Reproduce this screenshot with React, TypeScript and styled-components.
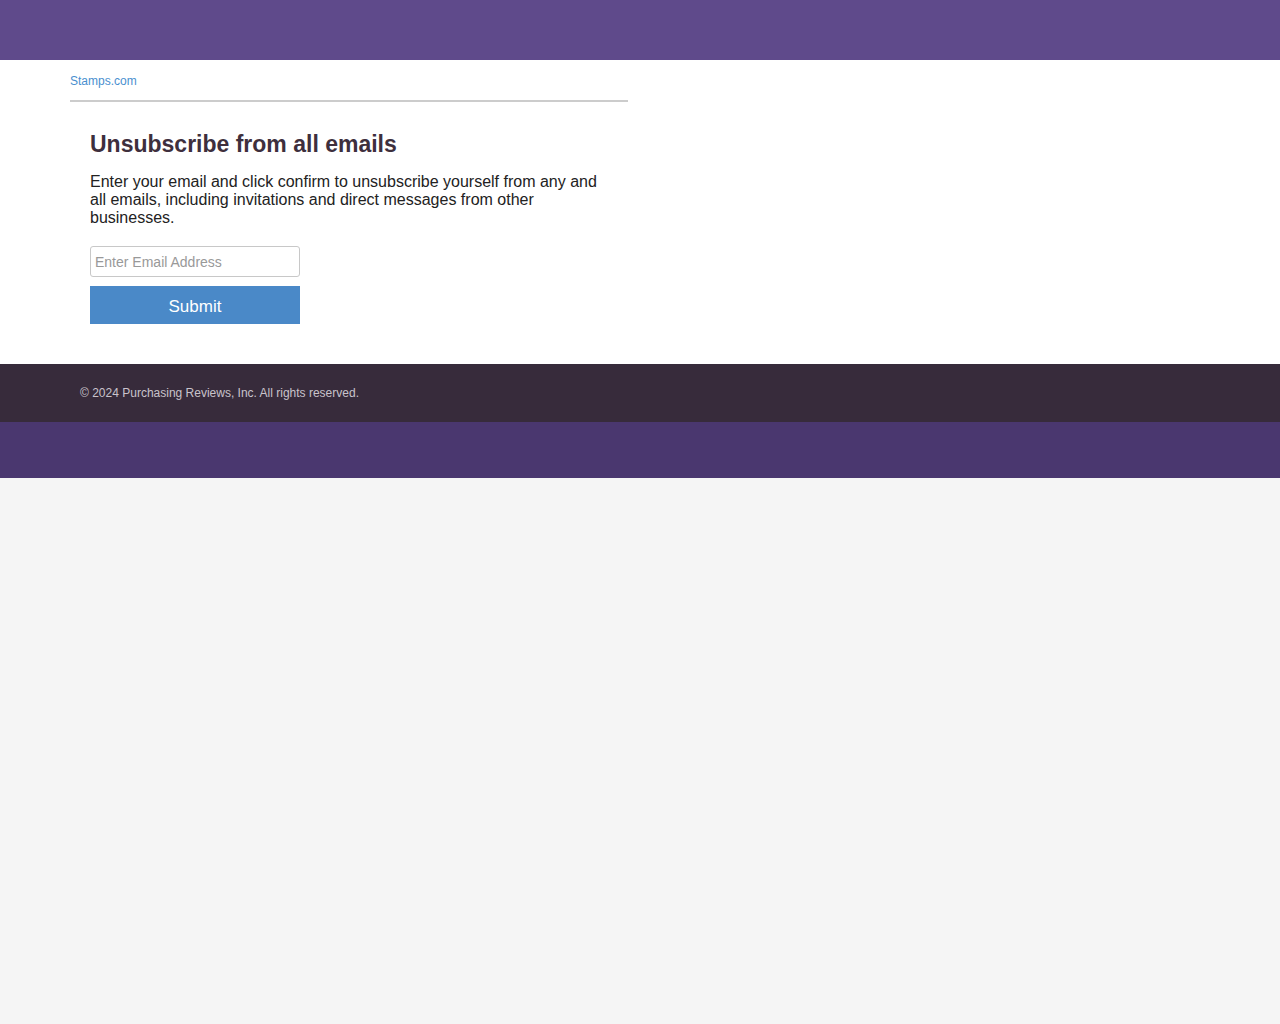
import React from "react";
import styled, { createGlobalStyle } from "styled-components";

const Global = createGlobalStyle`
  html, body { margin: 0; padding: 0; background: #f5f5f5; font-family: "Liberation Sans", Arial, sans-serif; }
  * { box-sizing: border-box; }
`;

const TopBar = styled.div`
  height: 60px;
  background: #5f4a8b;
`;

const Main = styled.div`
  background: #ffffff;
  padding: 14px 0 40px 70px;
`;

const Container = styled.div`
  width: 558px;
`;

const BrandLink = styled.a`
  display: block;
  font-size: 12px;
  line-height: 14px;
  color: #4a8fcf;
  text-decoration: none;
  padding-bottom: 12px;
  border-bottom: 2px solid #cccccc;
`;

const Content = styled.div`
  padding: 29px 20px 0 20px;
`;

const Heading = styled.h1`
  margin: 0;
  font-size: 23px;
  line-height: 26px;
  font-weight: bold;
  color: #3e2f3d;
`;

const Text = styled.p`
  margin: 16px 0 0 0;
  font-size: 16px;
  line-height: 18px;
  color: #222222;
`;

const Form = styled.form`
  margin-top: 19px;
  display: flex;
  flex-direction: column;
  gap: 9px;
  width: 210px;
`;

const Input = styled.input`
  width: 210px;
  height: 31px;
  border: 1px solid #c8c8c8;
  border-radius: 3px;
  padding: 0 4px;
  font-family: "Liberation Sans", Arial, sans-serif;
  font-size: 14px;
  color: #333;
  &::placeholder { color: #999999; }
`;

const Button = styled.button`
  width: 210px;
  height: 38px;
  border: none;
  padding: 4px 0 0 0;
  background: #4a89c8;
  color: #ffffff;
  font-family: "Liberation Sans", Arial, sans-serif;
  font-size: 17px;
  cursor: pointer;
`;

const Footer = styled.div`
  background: #372b3b;
  height: 58px;
  padding-left: 80px;
  display: flex;
  align-items: center;
  font-size: 12px;
  color: #c9c3cb;
`;

const BottomBar = styled.div`
  height: 56px;
  background: #4a376f;
`;

export default function App() {
  return (
    <>
      <Global />
      <TopBar />
      <Main>
        <Container>
          <BrandLink href="#">Stamps.com</BrandLink>
          <Content>
            <Heading>Unsubscribe from all emails</Heading>
            <Text>
              Enter your email and click confirm to unsubscribe yourself from any and all emails,
              including invitations and direct messages from other businesses.
            </Text>
            <Form onSubmit={(e) => e.preventDefault()}>
              <Input type="email" placeholder="Enter Email Address" />
              <Button type="submit">Submit</Button>
            </Form>
          </Content>
        </Container>
      </Main>
      <Footer>© 2024 Purchasing Reviews, Inc. All rights reserved.</Footer>
      <BottomBar />
    </>
  );
}
